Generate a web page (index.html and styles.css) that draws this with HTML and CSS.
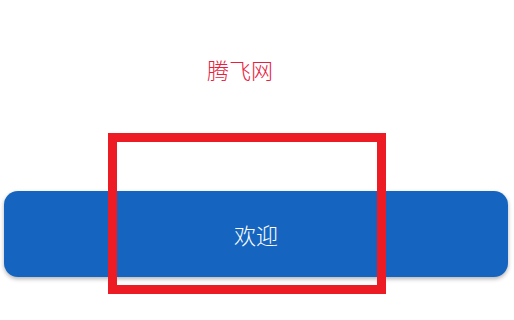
FILE: index.html
```html
<!DOCTYPE html>
<html lang="zh">
<head>
<meta charset="utf-8">
<link rel="stylesheet" href="styles.css">
</head>
<body>
<div class="page">
  <div class="title">腾飞网</div>
  <button class="welcome">欢迎</button>
  <div class="highlight"></div>
</div>
</body>
</html>
```
FILE: styles.css
```css
html, body {
  margin: 0;
  padding: 0;
  background: #ffffff;
}
.page {
  position: relative;
  width: 514px;
  height: 320px;
  display: flex;
  flex-direction: column;
  font-family: "Noto Sans CJK SC", "Noto Sans", sans-serif;
}
.title {
  margin-top: 53px;
  padding-left: 207px;
  font-size: 22px;
  font-weight: 300;
  line-height: 32px;
  color: #e8203d;
}
.welcome {
  margin: 106px 6px 0 4px;
  height: 86px;
  border: none;
  border-radius: 14px;
  background: #1565c0;
  color: #ffffff;
  font-family: "Noto Sans CJK SC", "Noto Sans", sans-serif;
  font-size: 22px;
  font-weight: 300;
  box-shadow: 0 2px 4px rgba(0, 0, 0, 0.3);
  padding: 0;
}
.highlight {
  position: absolute;
  left: 108px;
  top: 133px;
  width: 260px;
  height: 143px;
  border: 9px solid #ed1c24;
}
```
